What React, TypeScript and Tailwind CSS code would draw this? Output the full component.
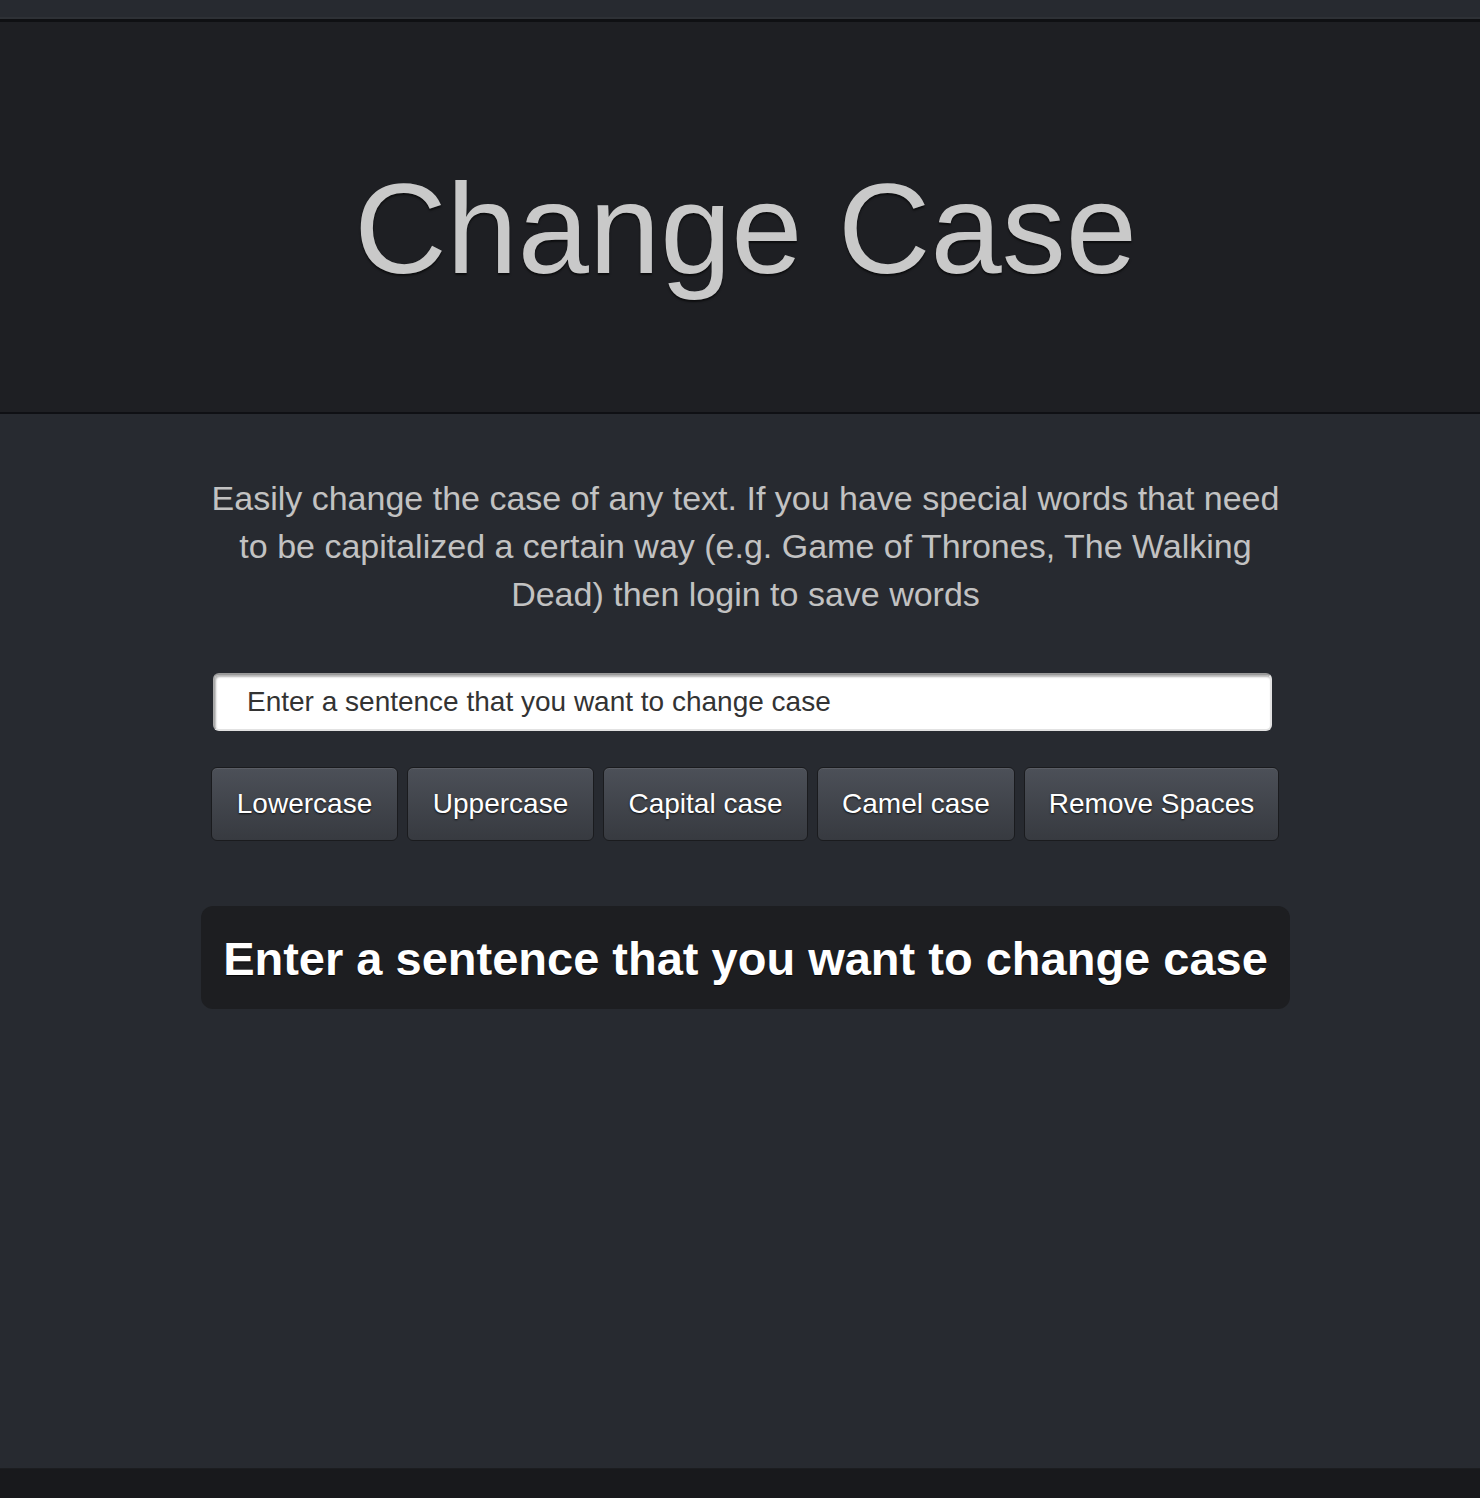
import React, { useState } from 'react';

const buttons = [
    { label: 'Lowercase', width: 'w-[187px]' },
    { label: 'Uppercase', width: 'w-[187px]' },
    { label: 'Capital case', width: 'w-[205px]' },
    { label: 'Camel case', width: 'w-[198px]' },
    { label: 'Remove Spaces', width: 'w-[255px]' },
];

export default function App() {
    const [text, setText] = useState('');
    const shown = text || 'Enter a sentence that you want to change case';

    return (
        <div className="flex min-h-screen flex-col bg-[#272a30] font-['Liberation_Sans',Arial,sans-serif]">
            {/* bottom edge of the top bar */}
            <div className="h-[17px] bg-[#272a30]" />
            <div className="h-[2px] bg-[#2e3136]" />
            <div className="h-[3px] bg-[#0f1013]" />

            <header className="flex justify-center bg-[#1e1f23] pt-[143px] pb-[119px] pl-[11px]">
                <h1 className="text-[128px] leading-none text-[#c9c9c9] [text-shadow:0_2px_2px_rgba(0,0,0,0.6)]">
                    Change Case
                </h1>
            </header>
            <div className="h-[2px] bg-[#0f1014]" />

            <main className="flex flex-1 justify-center bg-[#272a30] pl-[11px] pt-[60px]">
                <div className="flex w-[1089px] flex-col items-start">
                    <p className="w-full text-center text-[34px] leading-[48px] text-[#c2c2c2]">
                        Easily change the case of any text. If you have special words that need to be capitalized a certain way (e.g. Game of Thrones, The Walking Dead) then login to save words
                    </p>

                    <input
                        type="text"
                        value={text}
                        onChange={(e) => setText(e.target.value)}
                        placeholder="Enter a sentence that you want to change case"
                        className="mt-[55px] ml-[12px] h-[58px] w-[1059px] rounded-[6px] border-2 border-[#e2e2e2] border-t-[#9a9a9a] border-l-[#aaaaaa] bg-white pl-[32px] text-[28px] text-[#333] shadow-[inset_1px_2px_2px_rgba(0,0,0,0.3)] outline-none placeholder:text-[#333]"
                    />

                    <div className="mt-[36px] ml-[10px] flex gap-[9px]">
                        {buttons.map((b) => (
                            <button
                                key={b.label}
                                className={`${b.width} h-[74px] rounded-[6px] border border-[#1a1b1e] bg-gradient-to-b from-[#4c5058] to-[#373a40] text-[28px] text-white [text-shadow:0_1px_2px_rgba(0,0,0,0.8)] shadow-[inset_0_1px_0_rgba(255,255,255,0.08)]`}
                            >
                                {b.label}
                            </button>
                        ))}
                    </div>

                    <div className="mt-[65px] w-full rounded-[12px] bg-[#1d1e21] pt-[25px] pb-[23px] text-center">
                        <span className="text-[47px] font-bold leading-[55px] text-white [text-shadow:0_1px_1px_rgba(0,0,0,0.8)]">
                            {shown}
                        </span>
                    </div>
                </div>
            </main>

            <footer className="h-[30px] border-t border-[#1c1d20] bg-[#18191c]" />
        </div>
    );
}
